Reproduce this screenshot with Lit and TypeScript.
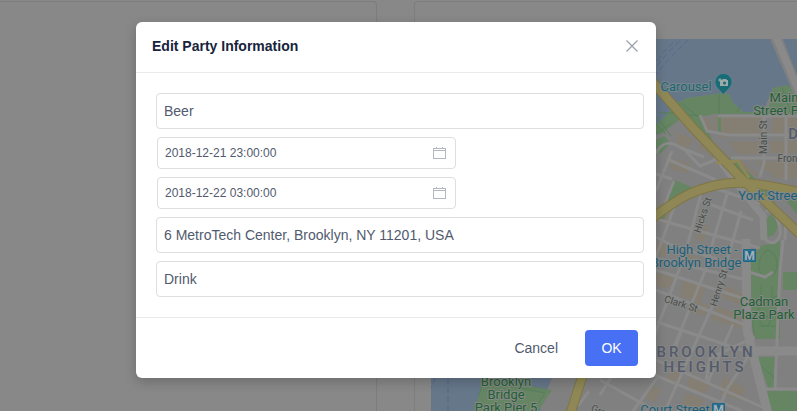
import { LitElement, html, css, svg } from "lit";
import { customElement, property } from "lit/decorators.js";

@customElement("city-map")
class CityMap extends LitElement {
  static styles = css`
    :host { display: block; overflow: hidden; background: #66778a; }
    svg { display: block; width: 100%; height: 100%; font-family: Roboto, "Liberation Sans", sans-serif; }
    .land { fill: #808080; }
    .block { fill: #857e73; }
    .park { fill: #658563; }
    .path { fill: none; stroke: #58805a; stroke-width: 1; }
    .road { fill: none; stroke: #8a8a8a; stroke-width: 3; }
    .wide { stroke-width: 7; }
    .avenue { stroke-width: 9; }
    .edge { fill: none; stroke: #7f7545; stroke-width: 10; }
    .highway { fill: none; stroke: #8f8856; stroke-width: 8; }
    .ferry { fill: none; stroke: #59698a; stroke-width: 1; stroke-dasharray: 6 3; }
    text { font-size: 13px; text-anchor: middle; paint-order: stroke; stroke: #868986; stroke-width: 2px; stroke-linejoin: round; }
    .blue { fill: #1c5f7d; }
    .teal { fill: #1c666f; stroke: #78868f; }
    .green { fill: #1f6034; }
    .street { fill: #4b4b4b; font-size: 10px; }
    .area { fill: #555a6c; font-size: 15px; font-weight: 500; letter-spacing: 3px; }
    .metro { fill: #1d678a; }
    .letter { fill: #a5b0b5; font-size: 12px; font-weight: 700; stroke: none; }
  `;

  metro(x: number, y: number) {
    return svg`<g><rect class="metro" x=${x} y=${y} width="13" height="13" rx="1" />
      <rect x=${x + 1.5} y=${y + 1.5} width="10" height="10" fill="none" stroke="#3f7c97" stroke-width=".6" />
      <text class="letter" x=${x + 6.5} y=${y + 11}>M</text></g>`;
  }

  render() {
    return html`<svg viewBox="431 39 366 372" preserveAspectRatio="xMinYMin slice" role="img" aria-label="Map of Brooklyn Heights">
      <path class="land" d="M552 378 541 403 538 440H900V92H797L787 85 773 88 768 100 763 112H743L733 103 729 94 723 93 687 98 677 103 668 114 656 128 630 200Z" />
      <path class="ferry" d="M652 73Q666 52 684 38M654 77Q670 57 690 38M652 68Q662 52 676 40M448 378V411M435 378 428 395" />
      <g class="block">
        <path d="M712 117 764 117 768 132 722 138ZM772 117H797V137H772ZM728 142 762 142V154H738ZM770 141H797V153H770ZM733 161 742 160 760 176 744 174ZM754 161H797V178L776 178ZM697 118 708 118 716 130 708 130Z" />
        <path d="M677 133 694 139 686 150 676 145ZM668 158 690 163 689 173 672 170ZM705 137 718 152 712 156 698 148ZM658 202 673 210 666 224 656 222ZM700 224 708 226 704 242 696 240ZM656 242 670 246 665 257 656 254ZM684 253 701 258 695 269 683 266Z" />
        <path d="M656 273 675 277 668 289 656 286ZM683 278 706 287 700 302 680 297ZM694 299 710 306 705 316 688 312ZM725 285 743 294 741 305 722 298ZM718 306 744 317 745 330 711 319ZM672 370 684 372 679 386 664 381ZM690 375 710 384 705 394 687 388ZM723 376 746 389 740 400 720 394ZM686 393 704 400 699 411H680ZM649 385 661 389 655 402 645 398Z" />
      </g>
      <path class="park" d="M656 125 665 116 677 103 687 98 723 93 729 94 733 103 743 112 768 112 773 88 787 85 797 92V114H715L700 117 712 139H703L680 119 662 134H656Z" />
      <path class="park" d="M674 180 692 187 674 205 660 211ZM656 214 670 207 664 219 656 221ZM723 161 733 158 766 189 780 211 766 205ZM778 191 797 194V214ZM771 214 779 225 774 235 764 238 761 226ZM760 246 780 241 780 270V339H755L745 270ZM783 272H797V290H783ZM757 357H775V390H769ZM766 391H797V411H766ZM485 378 552 390 538 411H474ZM656 140 664 136 671 143 660 154 656 150ZM718 116H721V132H718Z" />
      <path class="path" d="M719 93V115M658 112 700 116M681 103 696 115M742 103 737 112M773 94H797M782 87 790 112M657 117 671 136M656 124 666 134M656 134 670 124M768 250C757 255 757 272 763 277M768 250C780 256 779 270 772 276M777 296C755 306 748 320 756 339M759 326H776M765 316A5 5 0 1 1 765 326 5 5 0 1 1 765 316M762 367 776 379M483 381 545 393 536 407M485 378 478 396M761 296V284M772 298V286" />
      <path class="land" d="M770 39H783L797 75V105L790 85Z" />
      <path class="road wide" d="M776 37 803 101M716 156 745 194 763 216 764 240" />
      <path class="road" d="M700 115 707 131 728 135H797M718 116H797M764 113V163L760 177M731 158H797M786 117V180M786 217 785 240M656 153C663 140 672 142 681 148L704 157M672 151 656 191M667 159 716 180M682 147 700 166 715 160M656 174 672 179M674 181 662 211M656 237 671 245 730 263M656 219 760 248M701 201 753 220M712 187 760 204M676 202 656 257M702 189 690 236 679 270 649 350M728 191 714 238 707 266 674 347M741 211 730 251 712 307 681 375 665 411M656 270 748 300M656 290 745 325M656 258 746 280M657 322 748 352M755 337 710 358 706 380M682 329 672 357M733 324 708 382M748 357 727 389 718 411M656 360 762 407M640 369 742 411M600 380 656 411M589 391 578 406M617 368 605 387 600 395M657 378 633 411" />
      <path class="road" d="M764 238C774 250 784 237 779 225L775 211 765 211M749 272 765 277 773 272M783 240 780 270 775 388M765 389H797" />
      <path class="road avenue" d="M746 239 747 330 768 414M753 351H797" />
      <path class="edge" d="M650 79 695 130 743 180 804 238M650 220C682 195 695 190 717 185 740 180 756 183 804 193M586 365 568 421" />
      <path class="highway" d="M650 79 695 130 743 180 804 238M650 220C682 195 695 190 717 185 740 180 756 183 804 193M586 365 568 421" />
      <path d="M716 163 738 161 749 178" fill="none" stroke="#8f8856" stroke-width="3" />
      <text class="teal" x="686" y="91">Carousel</text>
      <path d="M723 95C721 90 715 88 715 82A8.5 8.5 0 0 1 732 82C732 88 726 90 723 95Z" fill="#176c76" stroke="#6e8790" stroke-width=".6" />
      <path d="M720 80H722L723 79H726L727 80H728V86H720Z" fill="#9ba9a9" />
      <circle cx="724.500" cy="83" r="1.5" fill="#176c76" />
      <path d="M718 80H722M720 78V82" stroke="#9ba9a9" />
      <text class="green" x="784" y="102">Main</text>
      <text class="green" x="785" y="115">Street Park</text>
      <text class="street" x="767" y="137" transform="rotate(-90 767 137)">Main St</text>
      <text class="area" x="822" y="139">DUMBO</text>
      <text class="street" x="795" y="162">Front St</text>
      <text class="blue" x="770" y="200">York Street</text>
      <text class="street" x="706" y="216" transform="rotate(-72 706 216)">Hicks St</text>
      <text class="blue" x="702" y="254">High Street -</text>
      <text class="blue" x="696" y="267">Brooklyn Bridge</text>
      ${this.metro(743, 249)}
      <text class="street" x="722" y="289" transform="rotate(-72 722 289)">Henry St</text>
      <text class="street" x="680" y="307" transform="rotate(18 680 307)">Clark St</text>
      <text class="green" x="764" y="306">Cadman</text>
      <text class="green" x="764" y="319">Plaza Park</text>
      <text class="area" x="706" y="357">BROOKLYN</text>
      <text class="area" x="705" y="372">HEIGHTS</text>
      <text class="green" x="506" y="386">Brooklyn</text>
      <text class="green" x="506" y="399">Bridge</text>
      <text class="green" x="506" y="412">Park Pier 5</text>
      <text class="street" x="608" y="418" transform="rotate(22 608 418)">Grace Ct</text>
      <text class="blue" x="675" y="414">Court Street</text>
      ${this.metro(712, 403)}
    </svg>`;
  }
}

@customElement("party-dialog")
class PartyDialog extends LitElement {
  @property() name = "Beer";
  @property() start = "2018-12-21 23:00:00";
  @property() end = "2018-12-22 03:00:00";
  @property() address = "6 MetroTech Center, Brooklyn, NY 11201, USA";
  @property() category = "Drink";

  static styles = css`
    :host { display: block; width: 100%; max-width: 520px; font: 14px/20px "Liberation Sans", Arial, sans-serif; color: #515a6e; }
    * { box-sizing: border-box; }
    .dialog { background: #fff; border-radius: 6px; box-shadow: 0 4px 12px rgba(0, 0, 0, 0.2); }
    header { display: flex; align-items: flex-start; justify-content: space-between; padding: 14px 16px 16px; border-bottom: 1px solid #e8eaec; }
    h1 { margin: 0; font-size: 14px; line-height: 20px; font-weight: 700; color: #17233d; }
    button { font: inherit; border: 0; background: none; color: inherit; cursor: pointer; }
    .close { padding: 2px 0 0; }
    svg { display: block; fill: none; stroke: #999fa8; }
    form { display: flex; flex-direction: column; gap: 8px; padding: 20px 12px 20px 20px; }
    input { width: 100%; font: inherit; color: inherit; background: #fff; border: 1px solid #dcdee2; border-radius: 4px; padding: 0 7px; height: 36px; }
    .date { display: grid; align-items: center; width: 299px; max-width: 100%; margin-left: 1px; }
    .date input, .date svg { grid-area: 1 / 1; }
    .date input { height: 32px; font-size: 12px; }
    .date svg { justify-self: end; margin-right: 9px; pointer-events: none; stroke: #b4b6c2; }
    footer { display: flex; justify-content: flex-end; gap: 11px; padding: 12px 18px; border-top: 1px solid #e8eaec; }
    footer button { height: 36px; padding: 0 16px; border-radius: 4px; }
    .primary { min-width: 53px; background: #4770f4; color: #fff; }
  `;

  dateField(label: string, value: string) {
    return html`<div class="date">
      <input aria-label=${label} .value=${value} />
      <svg width="14" height="14" viewBox="0 0 14 14" aria-hidden="true">
        <path d="M.5 2.5H12.5M.5 12.5H12.5M.5 2V13M12.5 2V13" /><path d="M1 4.5H12M3.5 1V3M9.5 1V3" />
      </svg>
    </div>`;
  }

  render() {
    return html`<section class="dialog" role="dialog" aria-modal="true" aria-labelledby="title">
      <header>
        <h1 id="title">Edit Party Information</h1>
        <button class="close" aria-label="Close">
          <svg width="16" height="16" viewBox="0 0 16 16"><path d="M2.5 2.5 13.5 13.5M13.5 2.5 2.5 13.5" stroke-width="1.2" /></svg>
        </button>
      </header>
      <form>
        <input aria-label="Name" .value=${this.name} />
        ${this.dateField("Start", this.start)}
        ${this.dateField("End", this.end)}
        <input aria-label="Address" .value=${this.address} />
        <input aria-label="Category" .value=${this.category} />
      </form>
      <footer>
        <button>Cancel</button>
        <button class="primary">OK</button>
      </footer>
    </section>`;
  }
}

@customElement("app-root")
class AppRoot extends LitElement {
  static styles = css`
    :host { display: block; position: relative; height: 100vh; overflow: hidden; background: #888; }
    * { box-sizing: border-box; }
    .page { display: grid; grid-template-columns: 377fr 383fr; gap: 37px; height: 100%; padding-top: 1px; }
    .card { min-width: 0; border: 1px solid #7d7d7e; border-bottom: 0; border-radius: 4px 4px 0 0; }
    .left { border-left: 0; border-top-left-radius: 0; }
    .right { display: flex; border-right: 0; border-top-right-radius: 0; padding: 37px 0 0 16px; }
    city-map { flex: 1; min-width: 0; }
    .layer { position: absolute; inset: 0; overflow: auto; display: flex; justify-content: center; align-items: flex-start; padding: 22px 5px 22px 0; }
  `;

  render() {
    return html`<main class="page">
        <section class="card left"></section>
        <section class="card right"><city-map></city-map></section>
      </main>
      <div class="layer"><party-dialog></party-dialog></div>`;
  }
}
